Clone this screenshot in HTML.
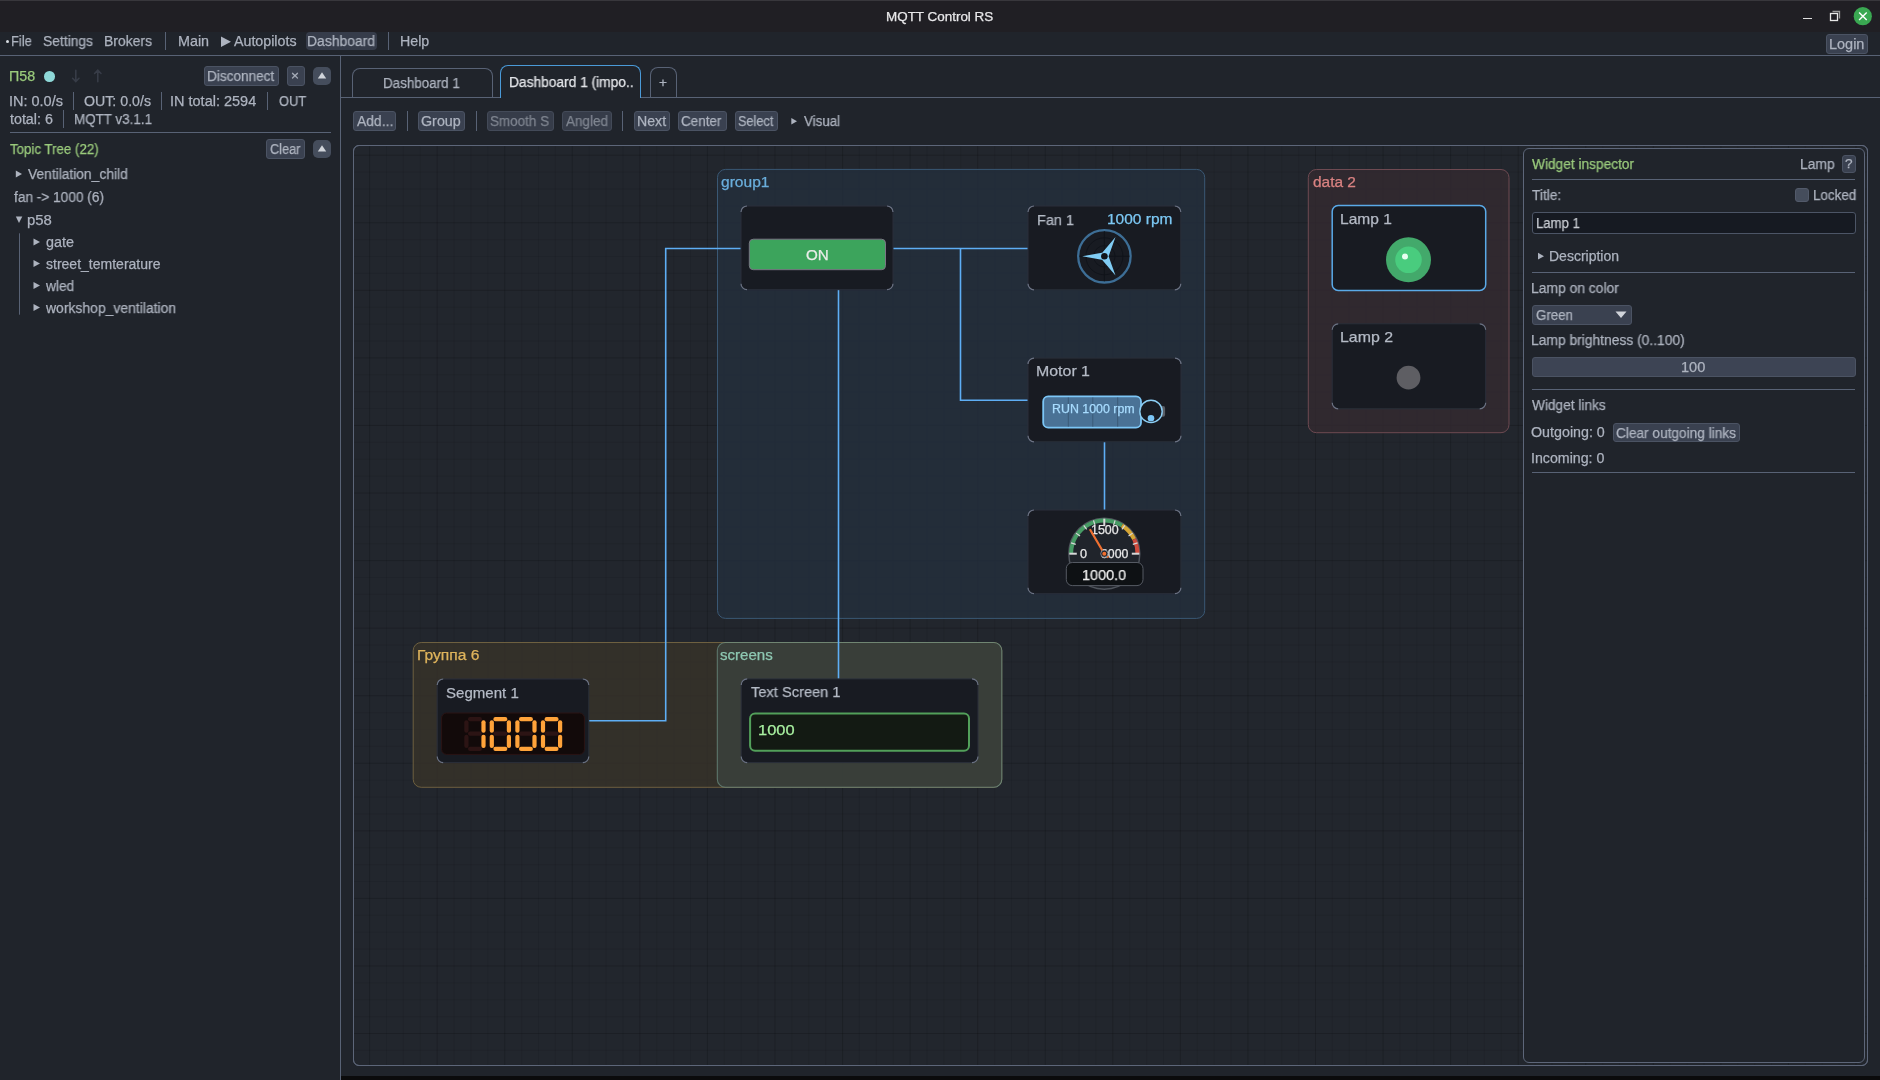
<!DOCTYPE html><html><head><meta charset="utf-8"><style>
html,body{margin:0;padding:0;width:1880px;height:1080px;overflow:hidden;background:#20242b;font-family:"Liberation Sans",sans-serif;}
.t{position:absolute;white-space:nowrap;will-change:transform;-webkit-text-stroke:0.25px currentColor;}
.r{position:absolute;box-sizing:border-box;}
svg{position:absolute;left:0;top:0;}
</style></head><body>
<div class="r" style="left:0px;top:0px;width:1880px;height:32px;background:#201f24;border-radius:0px;"></div>
<div class="r" style="left:0px;top:0px;width:1880px;height:1px;background:#38373c;border-radius:0px;"></div>
<div class="t" style="left:885.86px;top:10.0px;font-size:13px;line-height:13px;color:#e8e8ea;transform:scaleX(1.0333);transform-origin:0 0;">MQTT Control RS</div>
<div class="r" style="left:1803px;top:18px;width:9px;height:1px;background:#e0e0e0;border-radius:0px;"></div>
<svg width="1880" height="40" style="left:0;top:0"><g fill="none" stroke-width="1.3"><rect x="1830.5" y="13.5" width="7" height="7" stroke="#e8e8e8"/><path d="M1832.5 11.5h7v7" stroke="#9c9c9c"/></g><circle cx="1862.8" cy="16.2" r="9.1" fill="#3aa852"/><path d="M1859.1 12.4l7.6 7.6M1866.7 12.4l-7.6 7.6" stroke="#fff" stroke-width="1.4"/></svg>
<div class="r" style="left:0px;top:32px;width:1880px;height:23px;background:#20242b;border-radius:0px;"></div>
<div class="r" style="left:0px;top:55px;width:1880px;height:1px;background:#586275;border-radius:0px;"></div>
<div class="r" style="left:6px;top:40px;width:3px;height:3px;border-radius:2px;background:#d8dce2"></div>
<div class="t" style="left:10.98px;top:34.1px;font-size:14px;line-height:14px;color:#adb3bf;transform:scaleX(0.9234);transform-origin:0 0;">File</div>
<div class="t" style="left:43.31px;top:34.1px;font-size:14px;line-height:14px;color:#adb3bf;transform:scaleX(0.9879);transform-origin:0 0;">Settings</div>
<div class="t" style="left:104.40px;top:34.1px;font-size:14px;line-height:14px;color:#adb3bf;transform:scaleX(0.9957);transform-origin:0 0;">Brokers</div>
<div class="r" style="left:165px;top:32px;width:1px;height:18px;background:#586275;border-radius:0px;"></div>
<div class="t" style="left:177.87px;top:34.1px;font-size:14px;line-height:14px;color:#adb3bf;transform:scaleX(1.0246);transform-origin:0 0;">Main</div>
<svg width="240" height="60" style="left:0;top:0"><path d="M221 36.6L231 41.8L221 47Z" fill="#adb3bf"/></svg>
<div class="t" style="left:234.00px;top:34.1px;font-size:14px;line-height:14px;color:#adb3bf;transform:scaleX(1.0164);transform-origin:0 0;">Autopilots</div>
<div class="r" style="left:306px;top:32px;width:71px;height:18px;background:#363c4a;border:none;border-radius:4px;"></div>
<div class="t" style="left:307.41px;top:34.1px;font-size:14px;line-height:14px;color:#adb3bf;transform:scaleX(0.9925);transform-origin:0 0;">Dashboard</div>
<div class="r" style="left:388px;top:32px;width:1px;height:18px;background:#586275;border-radius:0px;"></div>
<div class="t" style="left:400.38px;top:34.1px;font-size:14px;line-height:14px;color:#adb3bf;transform:scaleX(1.0148);transform-origin:0 0;">Help</div>
<div class="r" style="left:1826px;top:34px;width:42px;height:20px;background:#3a4150;border:1px solid #4b5363;border-radius:3px;"></div>
<div class="t" style="left:1829.36px;top:37.1px;font-size:14px;line-height:14px;color:#adb3bf;transform:scaleX(1.0341);transform-origin:0 0;">Login</div>
<div class="r" style="left:340px;top:56px;width:1px;height:1024px;background:#586275;border-radius:0px;"></div>
<div class="t" style="left:9.38px;top:69.1px;font-size:14px;line-height:14px;color:#9acb7c;transform:scaleX(1.0167);transform-origin:0 0;">П58</div>
<div class="r" style="left:44.3px;top:71.2px;width:10.6px;height:10.6px;border-radius:50%;background:#8ed8d8"></div>
<svg width="120" height="100" style="left:0;top:0"><g stroke="#373c47" stroke-width="1.6" fill="none" stroke-linecap="round"><path d="M75.8 70.3v11.2M72.6 78.3l3.2 3.3 3.2-3.3M97.8 70.3v11.5M94.6 73.5l3.2-3.3 3.2 3.3"/></g></svg>
<div class="r" style="left:204px;top:66px;width:75px;height:20px;background:#3a4150;border:1px solid #4b5363;border-radius:3px;"></div>
<div class="t" style="left:206.93px;top:69.1px;font-size:14px;line-height:14px;color:#adb3bf;transform:scaleX(0.9721);transform-origin:0 0;">Disconnect</div>
<div class="r" style="left:287px;top:66px;width:18px;height:20px;background:#3a4150;border:1px solid #4b5363;border-radius:3px;"></div>
<div class="t" style="left:290.60px;top:68.9px;font-size:13.65px;line-height:13.65px;color:#adb3bf;">×</div>
<div class="r" style="left:313px;top:67px;width:18px;height:18px;background:#454d5c;border:none;border-radius:5px;"></div>
<div class="t" style="left:8.66px;top:94.1px;font-size:14px;line-height:14px;color:#adb3bf;transform:scaleX(1.0338);transform-origin:0 0;">IN: 0.0/s</div>
<div class="r" style="left:73px;top:92px;width:1px;height:18px;background:#586275;border-radius:0px;"></div>
<div class="t" style="left:83.59px;top:94.1px;font-size:14px;line-height:14px;color:#adb3bf;transform:scaleX(1.0131);transform-origin:0 0;">OUT: 0.0/s</div>
<div class="r" style="left:161px;top:92px;width:1px;height:18px;background:#586275;border-radius:0px;"></div>
<div class="t" style="left:170.35px;top:94.1px;font-size:14px;line-height:14px;color:#adb3bf;transform:scaleX(1.0355);transform-origin:0 0;">IN total: 2594</div>
<div class="r" style="left:267px;top:92px;width:1px;height:18px;background:#586275;border-radius:0px;"></div>
<div class="t" style="left:278.66px;top:94.1px;font-size:14px;line-height:14px;color:#adb3bf;transform:scaleX(0.9193);transform-origin:0 0;">OUT</div>
<div class="t" style="left:9.80px;top:112.1px;font-size:14px;line-height:14px;color:#adb3bf;transform:scaleX(1.0194);transform-origin:0 0;">total: 6</div>
<div class="r" style="left:63px;top:110px;width:1px;height:18px;background:#586275;border-radius:0px;"></div>
<div class="t" style="left:73.95px;top:112.1px;font-size:14px;line-height:14px;color:#adb3bf;transform:scaleX(0.9579);transform-origin:0 0;">MQTT v3.1.1</div>
<div class="r" style="left:10px;top:132px;width:321px;height:1px;background:#586275;border-radius:0px;"></div>
<div class="t" style="left:9.92px;top:142.3px;font-size:14px;line-height:14px;color:#9acb7c;transform:scaleX(0.9490);transform-origin:0 0;">Topic Tree (22)</div>
<div class="r" style="left:266px;top:139px;width:39px;height:20px;background:#3a4150;border:1px solid #4b5363;border-radius:3px;"></div>
<div class="t" style="left:269.86px;top:142.1px;font-size:14px;line-height:14px;color:#adb3bf;transform:scaleX(0.9108);transform-origin:0 0;">Clear</div>
<div class="r" style="left:313px;top:140px;width:18px;height:18px;background:#454d5c;border:none;border-radius:5px;"></div>
<svg width="340" height="170" style="left:0;top:0"><path d="M322 72.3L326.2 78.6H317.8Z" fill="#d0d4da"/><path d="M322 145.3L326.2 151.6H317.8Z" fill="#d0d4da"/></svg>
<svg width="60" height="320" style="left:0;top:0"><g fill="#adb3bf"><path d="M15.8 170.6L22 174.1L15.8 177.6Z"/><path d="M15.8 216.6H22.3L19 223Z"/><path d="M33.5 238.5L40 242L33.5 245.5Z"/><path d="M33.5 260L40 263.5L33.5 267Z"/><path d="M33.5 282L40 285.5L33.5 289Z"/><path d="M33.5 304L40 307.5L33.5 311Z"/></g><path d="M19.5 233.3V314.7" stroke="#586275" stroke-width="1"/></svg>
<div class="t" style="left:27.90px;top:167.4px;font-size:14px;line-height:14px;color:#adb3bf;transform:scaleX(0.9850);transform-origin:0 0;">Ventilation_child</div>
<div class="t" style="left:13.80px;top:190.3px;font-size:14px;line-height:14px;color:#adb3bf;transform:scaleX(0.9759);transform-origin:0 0;">fan -&gt; 1000 (6)</div>
<div class="t" style="left:27.04px;top:213.1px;font-size:14px;line-height:14px;color:#adb3bf;transform:scaleX(1.0639);transform-origin:0 0;">p58</div>
<div class="t" style="left:45.58px;top:235.4px;font-size:14px;line-height:14px;color:#adb3bf;transform:scaleX(1.0268);transform-origin:0 0;">gate</div>
<div class="t" style="left:45.80px;top:256.8px;font-size:14px;line-height:14px;color:#adb3bf;transform:scaleX(1.0009);transform-origin:0 0;">street_temterature</div>
<div class="t" style="left:46.20px;top:278.6px;font-size:14px;line-height:14px;color:#adb3bf;transform:scaleX(0.9785);transform-origin:0 0;">wled</div>
<div class="t" style="left:46.20px;top:300.6px;font-size:14px;line-height:14px;color:#adb3bf;transform:scaleX(0.9946);transform-origin:0 0;">workshop_ventilation</div>
<div class="r" style="left:341px;top:97px;width:1539px;height:1px;background:#586275;border-radius:0px;"></div>
<div class="r" style="left:352.4px;top:67.9px;width:140.5px;height:29.2px;border:1px solid #586275;border-bottom:none;border-radius:8px 8px 0 0;background:#20242b"></div>
<div class="t" style="left:383.45px;top:75.9px;font-size:14px;line-height:14px;color:#adb3bf;transform:scaleX(0.9566);transform-origin:0 0;">Dashboard 1</div>
<div class="r" style="left:500.3px;top:65.3px;width:140.5px;height:33px;border:1.5px solid #4a9ad8;border-bottom:none;border-radius:8px 8px 0 0;background:#20242b"></div>
<div class="t" style="left:508.62px;top:75.2px;font-size:14px;line-height:14px;color:#e2e4e8;transform:scaleX(0.9823);transform-origin:0 0;">Dashboard 1 (impo..</div>
<div class="r" style="left:650px;top:67.4px;width:26.7px;height:29.6px;border:1px solid #586275;border-bottom:none;border-radius:8px 8px 0 0;background:#20242b"></div>
<div class="t" style="left:659.10px;top:76.4px;font-size:13.65px;line-height:13.65px;color:#adb3bf;">+</div>
<div class="r" style="left:353px;top:111px;width:43px;height:20px;background:#3a4150;border:1px solid #4b5363;border-radius:3px;"></div>
<div class="t" style="left:357.00px;top:114.1px;font-size:14px;line-height:14px;color:#adb3bf;transform:scaleX(0.9915);transform-origin:0 0;">Add...</div>
<div class="r" style="left:407px;top:111px;width:1px;height:20px;background:#586275;border-radius:0px;"></div>
<div class="r" style="left:418px;top:111px;width:47px;height:20px;background:#3a4150;border:1px solid #4b5363;border-radius:3px;"></div>
<div class="t" style="left:421.29px;top:114.1px;font-size:14px;line-height:14px;color:#adb3bf;transform:scaleX(1.0213);transform-origin:0 0;">Group</div>
<div class="r" style="left:476px;top:111px;width:1px;height:20px;background:#586275;border-radius:0px;"></div>
<div class="r" style="left:487px;top:111px;width:67px;height:20px;background:#363c49;border:1px solid #434a58;border-radius:3px;"></div>
<div class="t" style="left:490.33px;top:114.1px;font-size:14px;line-height:14px;color:#7f8590;transform:scaleX(0.9601);transform-origin:0 0;">Smooth S</div>
<div class="r" style="left:562px;top:111px;width:50px;height:20px;background:#363c49;border:1px solid #434a58;border-radius:3px;"></div>
<div class="t" style="left:566.00px;top:114.1px;font-size:14px;line-height:14px;color:#7f8590;transform:scaleX(0.9649);transform-origin:0 0;">Angled</div>
<div class="r" style="left:622px;top:111px;width:1px;height:20px;background:#586275;border-radius:0px;"></div>
<div class="r" style="left:634px;top:111px;width:36px;height:20px;background:#3a4150;border:1px solid #4b5363;border-radius:3px;"></div>
<div class="t" style="left:636.89px;top:114.1px;font-size:14px;line-height:14px;color:#adb3bf;transform:scaleX(1.0109);transform-origin:0 0;">Next</div>
<div class="r" style="left:678px;top:111px;width:49px;height:20px;background:#3a4150;border:1px solid #4b5363;border-radius:3px;"></div>
<div class="t" style="left:681.33px;top:114.1px;font-size:14px;line-height:14px;color:#adb3bf;transform:scaleX(0.9611);transform-origin:0 0;">Center</div>
<div class="r" style="left:735px;top:111px;width:43px;height:20px;background:#3a4150;border:1px solid #4b5363;border-radius:3px;"></div>
<div class="t" style="left:738.36px;top:114.1px;font-size:14px;line-height:14px;color:#adb3bf;transform:scaleX(0.9081);transform-origin:0 0;">Select</div>
<svg width="820" height="140" style="left:0;top:0"><path d="M791.3 118L797 121.3L791.3 124.6Z" fill="#adb3bf"/></svg>
<div class="t" style="left:803.70px;top:114.1px;font-size:14px;line-height:14px;color:#adb3bf;transform:scaleX(0.9539);transform-origin:0 0;">Visual</div>
<div class="r" style="left:353.3px;top:145.4px;width:1514.5px;height:920.5px;border:1.3px solid #5d6679;border-radius:6px;background:#22262d;"></div>
<svg width="1880" height="1080" style="left:0;top:0"><path d="M369.60 146V1066" stroke="rgba(0,0,0,0.17)" stroke-width="1"/><path d="M386.49 146V1066" stroke="rgba(0,0,0,0.065)" stroke-width="1"/><path d="M403.38 146V1066" stroke="rgba(0,0,0,0.065)" stroke-width="1"/><path d="M420.27 146V1066" stroke="rgba(0,0,0,0.065)" stroke-width="1"/><path d="M437.16 146V1066" stroke="rgba(0,0,0,0.17)" stroke-width="1"/><path d="M454.06 146V1066" stroke="rgba(0,0,0,0.065)" stroke-width="1"/><path d="M470.95 146V1066" stroke="rgba(0,0,0,0.065)" stroke-width="1"/><path d="M487.84 146V1066" stroke="rgba(0,0,0,0.065)" stroke-width="1"/><path d="M504.73 146V1066" stroke="rgba(0,0,0,0.17)" stroke-width="1"/><path d="M521.62 146V1066" stroke="rgba(0,0,0,0.065)" stroke-width="1"/><path d="M538.51 146V1066" stroke="rgba(0,0,0,0.065)" stroke-width="1"/><path d="M555.40 146V1066" stroke="rgba(0,0,0,0.065)" stroke-width="1"/><path d="M572.29 146V1066" stroke="rgba(0,0,0,0.17)" stroke-width="1"/><path d="M589.18 146V1066" stroke="rgba(0,0,0,0.065)" stroke-width="1"/><path d="M606.07 146V1066" stroke="rgba(0,0,0,0.065)" stroke-width="1"/><path d="M622.97 146V1066" stroke="rgba(0,0,0,0.065)" stroke-width="1"/><path d="M639.86 146V1066" stroke="rgba(0,0,0,0.17)" stroke-width="1"/><path d="M656.75 146V1066" stroke="rgba(0,0,0,0.065)" stroke-width="1"/><path d="M673.64 146V1066" stroke="rgba(0,0,0,0.065)" stroke-width="1"/><path d="M690.53 146V1066" stroke="rgba(0,0,0,0.065)" stroke-width="1"/><path d="M707.42 146V1066" stroke="rgba(0,0,0,0.17)" stroke-width="1"/><path d="M724.31 146V1066" stroke="rgba(0,0,0,0.065)" stroke-width="1"/><path d="M741.20 146V1066" stroke="rgba(0,0,0,0.065)" stroke-width="1"/><path d="M758.09 146V1066" stroke="rgba(0,0,0,0.065)" stroke-width="1"/><path d="M774.98 146V1066" stroke="rgba(0,0,0,0.17)" stroke-width="1"/><path d="M791.88 146V1066" stroke="rgba(0,0,0,0.065)" stroke-width="1"/><path d="M808.77 146V1066" stroke="rgba(0,0,0,0.065)" stroke-width="1"/><path d="M825.66 146V1066" stroke="rgba(0,0,0,0.065)" stroke-width="1"/><path d="M842.55 146V1066" stroke="rgba(0,0,0,0.17)" stroke-width="1"/><path d="M859.44 146V1066" stroke="rgba(0,0,0,0.065)" stroke-width="1"/><path d="M876.33 146V1066" stroke="rgba(0,0,0,0.065)" stroke-width="1"/><path d="M893.22 146V1066" stroke="rgba(0,0,0,0.065)" stroke-width="1"/><path d="M910.11 146V1066" stroke="rgba(0,0,0,0.17)" stroke-width="1"/><path d="M927.00 146V1066" stroke="rgba(0,0,0,0.065)" stroke-width="1"/><path d="M943.89 146V1066" stroke="rgba(0,0,0,0.065)" stroke-width="1"/><path d="M960.78 146V1066" stroke="rgba(0,0,0,0.065)" stroke-width="1"/><path d="M977.68 146V1066" stroke="rgba(0,0,0,0.17)" stroke-width="1"/><path d="M994.57 146V1066" stroke="rgba(0,0,0,0.065)" stroke-width="1"/><path d="M1011.46 146V1066" stroke="rgba(0,0,0,0.065)" stroke-width="1"/><path d="M1028.35 146V1066" stroke="rgba(0,0,0,0.065)" stroke-width="1"/><path d="M1045.24 146V1066" stroke="rgba(0,0,0,0.17)" stroke-width="1"/><path d="M1062.13 146V1066" stroke="rgba(0,0,0,0.065)" stroke-width="1"/><path d="M1079.02 146V1066" stroke="rgba(0,0,0,0.065)" stroke-width="1"/><path d="M1095.91 146V1066" stroke="rgba(0,0,0,0.065)" stroke-width="1"/><path d="M1112.80 146V1066" stroke="rgba(0,0,0,0.17)" stroke-width="1"/><path d="M1129.69 146V1066" stroke="rgba(0,0,0,0.065)" stroke-width="1"/><path d="M1146.59 146V1066" stroke="rgba(0,0,0,0.065)" stroke-width="1"/><path d="M1163.48 146V1066" stroke="rgba(0,0,0,0.065)" stroke-width="1"/><path d="M1180.37 146V1066" stroke="rgba(0,0,0,0.17)" stroke-width="1"/><path d="M1197.26 146V1066" stroke="rgba(0,0,0,0.065)" stroke-width="1"/><path d="M1214.15 146V1066" stroke="rgba(0,0,0,0.065)" stroke-width="1"/><path d="M1231.04 146V1066" stroke="rgba(0,0,0,0.065)" stroke-width="1"/><path d="M1247.93 146V1066" stroke="rgba(0,0,0,0.17)" stroke-width="1"/><path d="M1264.82 146V1066" stroke="rgba(0,0,0,0.065)" stroke-width="1"/><path d="M1281.71 146V1066" stroke="rgba(0,0,0,0.065)" stroke-width="1"/><path d="M1298.61 146V1066" stroke="rgba(0,0,0,0.065)" stroke-width="1"/><path d="M1315.50 146V1066" stroke="rgba(0,0,0,0.17)" stroke-width="1"/><path d="M1332.39 146V1066" stroke="rgba(0,0,0,0.065)" stroke-width="1"/><path d="M1349.28 146V1066" stroke="rgba(0,0,0,0.065)" stroke-width="1"/><path d="M1366.17 146V1066" stroke="rgba(0,0,0,0.065)" stroke-width="1"/><path d="M1383.06 146V1066" stroke="rgba(0,0,0,0.17)" stroke-width="1"/><path d="M1399.95 146V1066" stroke="rgba(0,0,0,0.065)" stroke-width="1"/><path d="M1416.84 146V1066" stroke="rgba(0,0,0,0.065)" stroke-width="1"/><path d="M1433.73 146V1066" stroke="rgba(0,0,0,0.065)" stroke-width="1"/><path d="M1450.62 146V1066" stroke="rgba(0,0,0,0.17)" stroke-width="1"/><path d="M1467.51 146V1066" stroke="rgba(0,0,0,0.065)" stroke-width="1"/><path d="M1484.41 146V1066" stroke="rgba(0,0,0,0.065)" stroke-width="1"/><path d="M1501.30 146V1066" stroke="rgba(0,0,0,0.065)" stroke-width="1"/><path d="M1518.19 146V1066" stroke="rgba(0,0,0,0.17)" stroke-width="1"/><path d="M1535.08 146V1066" stroke="rgba(0,0,0,0.065)" stroke-width="1"/><path d="M1551.97 146V1066" stroke="rgba(0,0,0,0.065)" stroke-width="1"/><path d="M1568.86 146V1066" stroke="rgba(0,0,0,0.065)" stroke-width="1"/><path d="M1585.75 146V1066" stroke="rgba(0,0,0,0.17)" stroke-width="1"/><path d="M1602.64 146V1066" stroke="rgba(0,0,0,0.065)" stroke-width="1"/><path d="M1619.53 146V1066" stroke="rgba(0,0,0,0.065)" stroke-width="1"/><path d="M1636.42 146V1066" stroke="rgba(0,0,0,0.065)" stroke-width="1"/><path d="M1653.32 146V1066" stroke="rgba(0,0,0,0.17)" stroke-width="1"/><path d="M1670.21 146V1066" stroke="rgba(0,0,0,0.065)" stroke-width="1"/><path d="M1687.10 146V1066" stroke="rgba(0,0,0,0.065)" stroke-width="1"/><path d="M1703.99 146V1066" stroke="rgba(0,0,0,0.065)" stroke-width="1"/><path d="M1720.88 146V1066" stroke="rgba(0,0,0,0.17)" stroke-width="1"/><path d="M1737.77 146V1066" stroke="rgba(0,0,0,0.065)" stroke-width="1"/><path d="M1754.66 146V1066" stroke="rgba(0,0,0,0.065)" stroke-width="1"/><path d="M1771.55 146V1066" stroke="rgba(0,0,0,0.065)" stroke-width="1"/><path d="M1788.44 146V1066" stroke="rgba(0,0,0,0.17)" stroke-width="1"/><path d="M1805.34 146V1066" stroke="rgba(0,0,0,0.065)" stroke-width="1"/><path d="M1822.23 146V1066" stroke="rgba(0,0,0,0.065)" stroke-width="1"/><path d="M1839.12 146V1066" stroke="rgba(0,0,0,0.065)" stroke-width="1"/><path d="M1856.01 146V1066" stroke="rgba(0,0,0,0.17)" stroke-width="1"/><path d="M354 155.20H1867" stroke="rgba(0,0,0,0.17)" stroke-width="1"/><path d="M354 172.09H1867" stroke="rgba(0,0,0,0.065)" stroke-width="1"/><path d="M354 188.98H1867" stroke="rgba(0,0,0,0.065)" stroke-width="1"/><path d="M354 205.87H1867" stroke="rgba(0,0,0,0.065)" stroke-width="1"/><path d="M354 222.76H1867" stroke="rgba(0,0,0,0.17)" stroke-width="1"/><path d="M354 239.65H1867" stroke="rgba(0,0,0,0.065)" stroke-width="1"/><path d="M354 256.55H1867" stroke="rgba(0,0,0,0.065)" stroke-width="1"/><path d="M354 273.44H1867" stroke="rgba(0,0,0,0.065)" stroke-width="1"/><path d="M354 290.33H1867" stroke="rgba(0,0,0,0.17)" stroke-width="1"/><path d="M354 307.22H1867" stroke="rgba(0,0,0,0.065)" stroke-width="1"/><path d="M354 324.11H1867" stroke="rgba(0,0,0,0.065)" stroke-width="1"/><path d="M354 341.00H1867" stroke="rgba(0,0,0,0.065)" stroke-width="1"/><path d="M354 357.89H1867" stroke="rgba(0,0,0,0.17)" stroke-width="1"/><path d="M354 374.78H1867" stroke="rgba(0,0,0,0.065)" stroke-width="1"/><path d="M354 391.67H1867" stroke="rgba(0,0,0,0.065)" stroke-width="1"/><path d="M354 408.56H1867" stroke="rgba(0,0,0,0.065)" stroke-width="1"/><path d="M354 425.46H1867" stroke="rgba(0,0,0,0.17)" stroke-width="1"/><path d="M354 442.35H1867" stroke="rgba(0,0,0,0.065)" stroke-width="1"/><path d="M354 459.24H1867" stroke="rgba(0,0,0,0.065)" stroke-width="1"/><path d="M354 476.13H1867" stroke="rgba(0,0,0,0.065)" stroke-width="1"/><path d="M354 493.02H1867" stroke="rgba(0,0,0,0.17)" stroke-width="1"/><path d="M354 509.91H1867" stroke="rgba(0,0,0,0.065)" stroke-width="1"/><path d="M354 526.80H1867" stroke="rgba(0,0,0,0.065)" stroke-width="1"/><path d="M354 543.69H1867" stroke="rgba(0,0,0,0.065)" stroke-width="1"/><path d="M354 560.58H1867" stroke="rgba(0,0,0,0.17)" stroke-width="1"/><path d="M354 577.47H1867" stroke="rgba(0,0,0,0.065)" stroke-width="1"/><path d="M354 594.37H1867" stroke="rgba(0,0,0,0.065)" stroke-width="1"/><path d="M354 611.26H1867" stroke="rgba(0,0,0,0.065)" stroke-width="1"/><path d="M354 628.15H1867" stroke="rgba(0,0,0,0.17)" stroke-width="1"/><path d="M354 645.04H1867" stroke="rgba(0,0,0,0.065)" stroke-width="1"/><path d="M354 661.93H1867" stroke="rgba(0,0,0,0.065)" stroke-width="1"/><path d="M354 678.82H1867" stroke="rgba(0,0,0,0.065)" stroke-width="1"/><path d="M354 695.71H1867" stroke="rgba(0,0,0,0.17)" stroke-width="1"/><path d="M354 712.60H1867" stroke="rgba(0,0,0,0.065)" stroke-width="1"/><path d="M354 729.49H1867" stroke="rgba(0,0,0,0.065)" stroke-width="1"/><path d="M354 746.38H1867" stroke="rgba(0,0,0,0.065)" stroke-width="1"/><path d="M354 763.28H1867" stroke="rgba(0,0,0,0.17)" stroke-width="1"/><path d="M354 780.17H1867" stroke="rgba(0,0,0,0.065)" stroke-width="1"/><path d="M354 797.06H1867" stroke="rgba(0,0,0,0.065)" stroke-width="1"/><path d="M354 813.95H1867" stroke="rgba(0,0,0,0.065)" stroke-width="1"/><path d="M354 830.84H1867" stroke="rgba(0,0,0,0.17)" stroke-width="1"/><path d="M354 847.73H1867" stroke="rgba(0,0,0,0.065)" stroke-width="1"/><path d="M354 864.62H1867" stroke="rgba(0,0,0,0.065)" stroke-width="1"/><path d="M354 881.51H1867" stroke="rgba(0,0,0,0.065)" stroke-width="1"/><path d="M354 898.40H1867" stroke="rgba(0,0,0,0.17)" stroke-width="1"/><path d="M354 915.29H1867" stroke="rgba(0,0,0,0.065)" stroke-width="1"/><path d="M354 932.19H1867" stroke="rgba(0,0,0,0.065)" stroke-width="1"/><path d="M354 949.08H1867" stroke="rgba(0,0,0,0.065)" stroke-width="1"/><path d="M354 965.97H1867" stroke="rgba(0,0,0,0.17)" stroke-width="1"/><path d="M354 982.86H1867" stroke="rgba(0,0,0,0.065)" stroke-width="1"/><path d="M354 999.75H1867" stroke="rgba(0,0,0,0.065)" stroke-width="1"/><path d="M354 1016.64H1867" stroke="rgba(0,0,0,0.065)" stroke-width="1"/><path d="M354 1033.53H1867" stroke="rgba(0,0,0,0.17)" stroke-width="1"/><path d="M354 1050.42H1867" stroke="rgba(0,0,0,0.065)" stroke-width="1"/></svg>
<div class="r" style="left:353.3px;top:145.4px;width:1514.5px;height:920.5px;border:1.3px solid #5d6679;border-radius:6px;"></div>
<svg width="1880" height="1080" style="left:0;top:0"><rect x="717.5" y="169.4" width="487.2" height="449" rx="8" fill="rgba(35,47,62,0.76)" stroke="#3a5874" stroke-width="1"/><rect x="1308.3" y="169.5" width="200.7" height="263.2" rx="8" fill="rgba(53,42,48,0.76)" stroke="#6e4a52" stroke-width="1"/><rect x="413.2" y="642.5" width="588.6" height="144.8" rx="8" fill="rgba(57,51,41,0.76)" stroke="#6e6040" stroke-width="1"/><rect x="717.3" y="642.5" width="284.5" height="144.8" rx="8" fill="rgba(59,67,63,0.76)" stroke="rgba(135,188,172,0.48)" stroke-width="1.1"/><g fill="none" stroke="#5eaef5" stroke-width="1.6"><path d="M589 720.7H665.7V248.5H741"/><path d="M893 248.5H1028"/><path d="M960.5 248.5V400.3H1028"/><path d="M838.5 289.7V678.8"/><path d="M1104.5 441.8V510"/></g><rect x="741" y="206" width="152" height="83.69999999999999" rx="6" fill="#181b22" stroke="#2a2f3a" stroke-width="1"/><path d="M741 212A6 6 0 0 1 747 206M887 206A6 6 0 0 1 893 212M893 283.7A6 6 0 0 1 887 289.7M747 289.7A6 6 0 0 1 741 283.7" fill="none" stroke="#6b7283" stroke-width="1.2"/><rect x="1028" y="206" width="152.79999999999995" height="83.80000000000001" rx="6" fill="#181b22" stroke="#2a2f3a" stroke-width="1"/><path d="M1028 212A6 6 0 0 1 1034 206M1174.8 206A6 6 0 0 1 1180.8 212M1180.8 283.8A6 6 0 0 1 1174.8 289.8M1034 289.8A6 6 0 0 1 1028 283.8" fill="none" stroke="#6b7283" stroke-width="1.2"/><rect x="1028" y="358.1" width="153" height="83.69999999999999" rx="6" fill="#181b22" stroke="#2a2f3a" stroke-width="1"/><path d="M1028 364.1A6 6 0 0 1 1034 358.1M1175 358.1A6 6 0 0 1 1181 364.1M1181 435.8A6 6 0 0 1 1175 441.8M1034 441.8A6 6 0 0 1 1028 435.8" fill="none" stroke="#6b7283" stroke-width="1.2"/><rect x="1028" y="510" width="152.9000000000001" height="83.70000000000005" rx="6" fill="#181b22" stroke="#2a2f3a" stroke-width="1"/><path d="M1028 516A6 6 0 0 1 1034 510M1174.9 510A6 6 0 0 1 1180.9 516M1180.9 587.7A6 6 0 0 1 1174.9 593.7M1034 593.7A6 6 0 0 1 1028 587.7" fill="none" stroke="#6b7283" stroke-width="1.2"/><rect x="1332.2" y="205.4" width="153.5" height="84.99999999999997" rx="6" fill="#181b22" stroke="#5aaae8" stroke-width="1.5"/><rect x="1332.2" y="323.8" width="153.5" height="85.0" rx="6" fill="#181b22" stroke="#2a2f3a" stroke-width="1"/><path d="M1332.2 329.8A6 6 0 0 1 1338.2 323.8M1479.7 323.8A6 6 0 0 1 1485.7 329.8M1485.7 402.8A6 6 0 0 1 1479.7 408.8M1338.2 408.8A6 6 0 0 1 1332.2 402.8" fill="none" stroke="#6b7283" stroke-width="1.2"/><rect x="437.2" y="679" width="151.59999999999997" height="83.60000000000002" rx="6" fill="#181b22" stroke="#2a2f3a" stroke-width="1"/><path d="M437.2 685A6 6 0 0 1 443.2 679M582.8 679A6 6 0 0 1 588.8 685M588.8 756.6A6 6 0 0 1 582.8 762.6M443.2 762.6A6 6 0 0 1 437.2 756.6" fill="none" stroke="#6b7283" stroke-width="1.2"/><rect x="741.2" y="678.9" width="236.79999999999995" height="83.70000000000005" rx="6" fill="#181b22" stroke="#2a2f3a" stroke-width="1"/><path d="M741.2 684.9A6 6 0 0 1 747.2 678.9M972 678.9A6 6 0 0 1 978 684.9M978 756.6A6 6 0 0 1 972 762.6M747.2 762.6A6 6 0 0 1 741.2 756.6" fill="none" stroke="#6b7283" stroke-width="1.2"/><rect x="749.3" y="239.2" width="136.2" height="30.5" rx="4" fill="#3ca45c" stroke="#7b7585" stroke-width="1"/><circle cx="1104.4" cy="256.3" r="26.2" fill="#181b22" stroke="#3d6e96" stroke-width="2.3"/><g stroke="#10131a" stroke-width="0.9" fill="none"><circle cx="1104.4" cy="256.3" r="18.5"/><circle cx="1104.4" cy="256.3" r="10.7"/><path d="M1104.4 231.3V281.3M1079.4 256.3H1129.4"/></g><path d="M1082.20 256.30L1105.90 252.00L1105.90 260.60ZM1115.50 237.07L1107.37 259.75L1099.93 255.45ZM1115.50 275.53L1099.93 257.15L1107.37 252.85Z" fill="#80cdf5"/><circle cx="1104.4" cy="256.3" r="3.3" fill="#111419"/><rect x="1043.2" y="396.4" width="97.8" height="31.3" rx="5" fill="#4a7296" stroke="#7cc6f6" stroke-width="1.8"/><g stroke="#3a5a78" stroke-width="1"><path d="M1068.3 397.5V426.6M1092.8 397.5V426.6M1117.7 397.5V426.6"/></g><rect x="1160.3" y="406" width="4.8" height="10.8" rx="2" fill="#5a5e66"/><circle cx="1151" cy="411.4" r="11.2" fill="#181b22" stroke="#8ccff5" stroke-width="1.4"/><circle cx="1151" cy="418.2" r="3.3" fill="#7cc6f6"/><circle cx="1104.3" cy="553.7" r="35.5" fill="#20242b" stroke="#4f545c" stroke-width="1.5"/><path d="M1071.10 553.70A33.2 33.2 0 0 1 1121.89 525.54" fill="none" stroke="#479b65" stroke-width="4.0"/><path d="M1121.89 525.54A33.2 33.2 0 0 1 1134.14 539.15" fill="none" stroke="#d6a636" stroke-width="4.0"/><path d="M1134.14 539.15A33.2 33.2 0 0 1 1137.50 553.70" fill="none" stroke="#cf4b3d" stroke-width="4.0"/><path d="M1076.80 553.70L1069.30 553.70" stroke="#d8d8d8" stroke-width="2"/><path d="M1075.77 544.43L1071.01 542.88" stroke="#d8d8d8" stroke-width="1.2"/><path d="M1080.03 536.07L1075.98 533.13" stroke="#d8d8d8" stroke-width="1.2"/><path d="M1086.67 529.43L1083.73 525.38" stroke="#d8d8d8" stroke-width="1.2"/><path d="M1095.03 525.17L1093.48 520.41" stroke="#d8d8d8" stroke-width="1.2"/><path d="M1104.30 526.20L1104.30 518.70" stroke="#d8d8d8" stroke-width="2"/><path d="M1113.57 525.17L1115.12 520.41" stroke="#d8d8d8" stroke-width="1.2"/><path d="M1121.93 529.43L1124.87 525.38" stroke="#d8d8d8" stroke-width="1.2"/><path d="M1128.57 536.07L1132.62 533.13" stroke="#d8d8d8" stroke-width="1.2"/><path d="M1132.83 544.43L1137.59 542.88" stroke="#d8d8d8" stroke-width="1.2"/><path d="M1131.80 553.70L1139.30 553.70" stroke="#d8d8d8" stroke-width="2"/><rect x="1066.3" y="562.5" width="76.7" height="23.1" rx="6" fill="#0e1114" stroke="#555a63" stroke-width="1"/><circle cx="1408.5" cy="259.8" r="22.5" fill="#43a96b"/><circle cx="1408.5" cy="259.8" r="13.3" fill="#49cc7e"/><circle cx="1405" cy="256.6" r="3" fill="#e6fff0"/><circle cx="1408.5" cy="377.7" r="11.9" fill="#5e5e63"/><rect x="441.6" y="713" width="142.8" height="41.4" rx="5" fill="#120a0a" stroke="#2a1414" stroke-width="1"/><rect x="468.00" y="717.00" width="13.90" height="4.20" rx="2" fill="#2c1414"/><rect x="468.00" y="746.80" width="13.90" height="4.20" rx="2" fill="#2c1414"/><rect x="468.00" y="731.50" width="13.90" height="4.20" rx="2" fill="#2c1414"/><rect x="464.30" y="720.20" width="4.20" height="12.60" rx="2" fill="#2c1414"/><rect x="481.40" y="720.20" width="4.20" height="12.60" rx="2" fill="#ffa33a"/><rect x="464.30" y="734.80" width="4.20" height="13.20" rx="2" fill="#2c1414"/><rect x="481.40" y="734.80" width="4.20" height="13.20" rx="2" fill="#ffa33a"/><rect x="493.40" y="717.00" width="13.90" height="4.20" rx="2" fill="#ffa33a"/><rect x="493.40" y="746.80" width="13.90" height="4.20" rx="2" fill="#ffa33a"/><rect x="493.40" y="731.50" width="13.90" height="4.20" rx="2" fill="#2c1414"/><rect x="489.70" y="720.20" width="4.20" height="12.60" rx="2" fill="#ffa33a"/><rect x="506.80" y="720.20" width="4.20" height="12.60" rx="2" fill="#ffa33a"/><rect x="489.70" y="734.80" width="4.20" height="13.20" rx="2" fill="#ffa33a"/><rect x="506.80" y="734.80" width="4.20" height="13.20" rx="2" fill="#ffa33a"/><rect x="519.00" y="717.00" width="13.90" height="4.20" rx="2" fill="#ffa33a"/><rect x="519.00" y="746.80" width="13.90" height="4.20" rx="2" fill="#ffa33a"/><rect x="519.00" y="731.50" width="13.90" height="4.20" rx="2" fill="#2c1414"/><rect x="515.30" y="720.20" width="4.20" height="12.60" rx="2" fill="#ffa33a"/><rect x="532.40" y="720.20" width="4.20" height="12.60" rx="2" fill="#ffa33a"/><rect x="515.30" y="734.80" width="4.20" height="13.20" rx="2" fill="#ffa33a"/><rect x="532.40" y="734.80" width="4.20" height="13.20" rx="2" fill="#ffa33a"/><rect x="544.60" y="717.00" width="13.90" height="4.20" rx="2" fill="#ffa33a"/><rect x="544.60" y="746.80" width="13.90" height="4.20" rx="2" fill="#ffa33a"/><rect x="544.60" y="731.50" width="13.90" height="4.20" rx="2" fill="#2c1414"/><rect x="540.90" y="720.20" width="4.20" height="12.60" rx="2" fill="#ffa33a"/><rect x="558.00" y="720.20" width="4.20" height="12.60" rx="2" fill="#ffa33a"/><rect x="540.90" y="734.80" width="4.20" height="13.20" rx="2" fill="#ffa33a"/><rect x="558.00" y="734.80" width="4.20" height="13.20" rx="2" fill="#ffa33a"/><rect x="750.1" y="713.5" width="218.9" height="37.2" rx="5" fill="#131a13" stroke="#52a05a" stroke-width="2"/></svg>
<div class="t" style="left:720.53px;top:174.6px;font-size:14px;line-height:14px;color:#6aaedc;transform:scaleX(1.1111);transform-origin:0 0;">group1</div>
<div class="t" style="left:1312.64px;top:174.8px;font-size:14px;line-height:14px;color:#d98282;transform:scaleX(1.1037);transform-origin:0 0;">data 2</div>
<div class="t" style="left:416.78px;top:648.4px;font-size:14px;line-height:14px;color:#dfb45c;transform:scaleX(1.1121);transform-origin:0 0;">Группа 6</div>
<div class="t" style="left:720.47px;top:648.4px;font-size:14px;line-height:14px;color:#8ec8b2;transform:scaleX(1.0769);transform-origin:0 0;">screens</div>
<div class="t" style="left:805.94px;top:247.7px;font-size:14px;line-height:14px;color:#e8ece8;transform:scaleX(1.0833);transform-origin:0 0;">ON</div>
<div class="t" style="left:1036.54px;top:211.5px;font-size:15px;line-height:15px;color:#b5bbc6;transform:scaleX(0.9643);transform-origin:0 0;">Fan 1</div>
<div class="t" style="left:1106.78px;top:212.3px;font-size:14px;line-height:14px;color:#7cc8f4;transform:scaleX(1.1068);transform-origin:0 0;">1000 rpm</div>
<div class="t" style="left:1036.13px;top:363.2px;font-size:15px;line-height:15px;color:#b5bbc6;transform:scaleX(1.0613);transform-origin:0 0;">Motor 1</div>
<div class="t" style="left:1051.57px;top:403.4px;font-size:12px;line-height:12px;color:#a8dcff;transform:scaleX(1.0332);transform-origin:0 0;">RUN 1000 rpm</div>
<div class="t" style="left:1080.47px;top:547.7px;font-size:12px;line-height:12px;color:#e8e8e8;transform:scaleX(1.0526);transform-origin:0 0;">0</div>
<div class="t" style="left:1090.87px;top:523.6px;font-size:12px;line-height:12px;color:#e8e8e8;transform:scaleX(1.0356);transform-origin:0 0;">1500</div>
<div class="t" style="left:1100.99px;top:547.7px;font-size:12px;line-height:12px;color:#e8e8e8;transform:scaleX(1.0272);transform-origin:0 0;">3000</div>
<div class="t" style="left:1081.94px;top:566.9px;font-size:15px;line-height:15px;color:#f0f0f0;transform:scaleX(0.9638);transform-origin:0 0;">1000.0</div>
<div class="t" style="left:1340.06px;top:210.8px;font-size:15px;line-height:15px;color:#b5bbc6;transform:scaleX(1.0353);transform-origin:0 0;">Lamp 1</div>
<div class="t" style="left:1340.03px;top:328.7px;font-size:15px;line-height:15px;color:#b5bbc6;transform:scaleX(1.0603);transform-origin:0 0;">Lamp 2</div>
<div class="t" style="left:445.50px;top:684.9px;font-size:15px;line-height:15px;color:#b5bbc6;transform:scaleX(1.0028);transform-origin:0 0;">Segment 1</div>
<div class="t" style="left:750.61px;top:684.1px;font-size:15px;line-height:15px;color:#b5bbc6;transform:scaleX(0.9768);transform-origin:0 0;">Text Screen 1</div>
<div class="t" style="left:757.80px;top:722.1px;font-size:15px;line-height:15px;color:#a8f0a0;transform:scaleX(1.0946);transform-origin:0 0;">1000</div>
<svg width="1880" height="1080" style="left:0;top:0"><path d="M1104.3 553.7L1089.9 529.2M1104.3 553.7L1108.5 557.5" stroke="#f07030" stroke-width="2.2" fill="none"/><circle cx="1104.3" cy="553.7" r="3.6" fill="#20242b" stroke="#8a8f96" stroke-width="0.9"/><circle cx="1104.3" cy="553.7" r="2" fill="#f07030"/></svg>
<div class="r" style="left:1523px;top:148px;width:342px;height:915.2px;background:#20242b;border:1.3px solid #5d6679;border-radius:6px;"></div>
<div class="t" style="left:1532.40px;top:157.0px;font-size:14px;line-height:14px;color:#9acb7c;transform:scaleX(0.9788);transform-origin:0 0;">Widget inspector</div>
<div class="t" style="left:1799.51px;top:157.0px;font-size:14px;line-height:14px;color:#adb3bf;transform:scaleX(0.9880);transform-origin:0 0;">Lamp</div>
<div class="r" style="left:1842px;top:155px;width:14px;height:18px;background:#3a4150;border:1px solid #4b5363;border-radius:3px;"></div>
<div class="t" style="left:1844.60px;top:156.9px;font-size:13.65px;line-height:13.65px;color:#adb3bf;">?</div>
<div class="r" style="left:1532px;top:179px;width:323px;height:1px;background:#586275;border-radius:0px;"></div>
<div class="t" style="left:1532.21px;top:187.7px;font-size:14px;line-height:14px;color:#adb3bf;transform:scaleX(0.9752);transform-origin:0 0;">Title:</div>
<div class="r" style="left:1795.2px;top:188.1px;width:13.799999999999955px;height:13.599999999999994px;background:#454d5c;border:1px solid #525a6a;border-radius:3px;"></div>
<div class="t" style="left:1812.64px;top:187.7px;font-size:14px;line-height:14px;color:#adb3bf;transform:scaleX(0.9606);transform-origin:0 0;">Locked</div>
<div class="r" style="left:1532px;top:212px;width:324px;height:22px;background:#161a22;border:1px solid #4c5566;border-radius:3px;"></div>
<div class="t" style="left:1535.67px;top:216.0px;font-size:14px;line-height:14px;color:#c8ccd2;transform:scaleX(0.9376);transform-origin:0 0;">Lamp 1</div>
<svg width="1880" height="400" style="left:0;top:0"><path d="M1538 252.8L1544 256.2L1538 259.6Z" fill="#adb3bf"/><path d="M1616 311.5H1626L1621 317.5Z" fill="#d0d4da"/></svg>
<div class="t" style="left:1549.40px;top:248.5px;font-size:14px;line-height:14px;color:#adb3bf;transform:scaleX(1.0000);transform-origin:0 0;">Description</div>
<div class="r" style="left:1532px;top:272px;width:323px;height:1px;background:#586275;border-radius:0px;"></div>
<div class="t" style="left:1530.91px;top:280.8px;font-size:14px;line-height:14px;color:#adb3bf;transform:scaleX(0.9908);transform-origin:0 0;">Lamp on color</div>
<div class="r" style="left:1532px;top:305.3px;width:100px;height:19.5px;background:#3a4150;border:1px solid #4b5363;border-radius:3px;"></div>
<svg width="1880" height="400" style="left:0;top:0"><path d="M1615.5 311.5H1626.5L1621 318Z" fill="#d0d4da"/></svg>
<div class="t" style="left:1535.83px;top:308.1px;font-size:14px;line-height:14px;color:#adb3bf;transform:scaleX(0.9517);transform-origin:0 0;">Green</div>
<div class="t" style="left:1530.91px;top:332.8px;font-size:14px;line-height:14px;color:#adb3bf;transform:scaleX(0.9876);transform-origin:0 0;">Lamp brightness (0..100)</div>
<div class="r" style="left:1532px;top:357.3px;width:324px;height:19.5px;background:#3d4454;border:1px solid #4b5363;border-radius:3px;"></div>
<div class="t" style="left:1680.85px;top:360.1px;font-size:14px;line-height:14px;color:#adb3bf;transform:scaleX(1.0415);transform-origin:0 0;">100</div>
<div class="r" style="left:1532px;top:389px;width:323px;height:1px;background:#586275;border-radius:0px;"></div>
<div class="t" style="left:1531.90px;top:398.3px;font-size:14px;line-height:14px;color:#adb3bf;transform:scaleX(0.9760);transform-origin:0 0;">Widget links</div>
<div class="t" style="left:1531.29px;top:424.7px;font-size:14px;line-height:14px;color:#adb3bf;transform:scaleX(1.0197);transform-origin:0 0;">Outgoing: 0</div>
<div class="r" style="left:1613px;top:422.5px;width:127px;height:19.80000000000001px;background:#3a4150;border:1px solid #4b5363;border-radius:3px;"></div>
<div class="t" style="left:1616.32px;top:425.6px;font-size:14px;line-height:14px;color:#adb3bf;transform:scaleX(0.9754);transform-origin:0 0;">Clear outgoing links</div>
<div class="t" style="left:1530.68px;top:450.9px;font-size:14px;line-height:14px;color:#adb3bf;transform:scaleX(1.0142);transform-origin:0 0;">Incoming: 0</div>
<div class="r" style="left:1532px;top:472px;width:323px;height:1px;background:#586275;border-radius:0px;"></div>
<div class="r" style="left:341px;top:1076px;width:1539px;height:4px;background:#0b0b0c;border-radius:0px;"></div>
</body></html>
